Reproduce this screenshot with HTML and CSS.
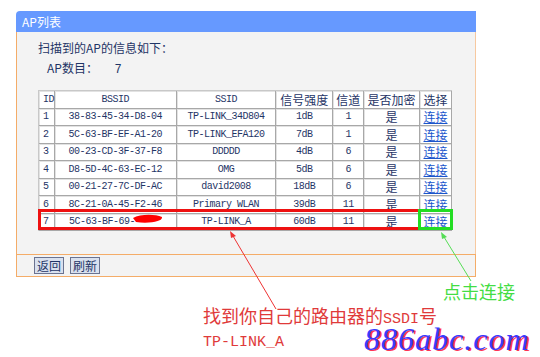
FILE: index.html
```html
<!DOCTYPE html>
<html lang="zh-CN">
<head>
    <meta charset="UTF-8">
    <title>AP列表</title>
    <link rel="stylesheet" href="styles.css">
</head>
<body>
    <div class="page">
        <div class="panel">
            <div class="panel-title">AP列表</div>
            <div class="panel-body">
                <p class="info">扫描到的AP的信息如下：</p>
                <p class="count">AP数目： <span class="num">7</span></p>
                <table class="ap-table">
                    <tr>
                        <th class="c-id mono">ID</th>
                        <th class="c-bssid mono">BSSID</th>
                        <th class="c-ssid mono">SSID</th>
                        <th class="c-sig">信号强度</th>
                        <th class="c-ch">信道</th>
                        <th class="c-enc">是否加密</th>
                        <th class="c-sel">选择</th>
                    </tr>
                    <tr><td class="mono">1</td><td class="mono">38-83-45-34-D8-04</td><td class="mono">TP-LINK_34D804</td><td class="mono">1dB</td><td class="mono">1</td><td>是</td><td><a href="#">连接</a></td></tr>
                    <tr><td class="mono">2</td><td class="mono">5C-63-BF-EF-A1-20</td><td class="mono">TP-LINK_EFA120</td><td class="mono">7dB</td><td class="mono">1</td><td>是</td><td><a href="#">连接</a></td></tr>
                    <tr><td class="mono">3</td><td class="mono">00-23-CD-3F-37-F8</td><td class="mono">DDDDD</td><td class="mono">4dB</td><td class="mono">6</td><td>是</td><td><a href="#">连接</a></td></tr>
                    <tr><td class="mono">4</td><td class="mono">D8-5D-4C-63-EC-12</td><td class="mono">OMG</td><td class="mono">5dB</td><td class="mono">6</td><td>是</td><td><a href="#">连接</a></td></tr>
                    <tr><td class="mono">5</td><td class="mono">00-21-27-7C-DF-AC</td><td class="mono">david2008</td><td class="mono">18dB</td><td class="mono">6</td><td>是</td><td><a href="#">连接</a></td></tr>
                    <tr><td class="mono">6</td><td class="mono">8C-21-0A-45-F2-46</td><td class="mono">Primary WLAN</td><td class="mono">39dB</td><td class="mono">11</td><td>是</td><td><a href="#">连接</a></td></tr>
                    <tr><td class="mono">7</td><td class="mono bssid-hidden">5C-63-BF-69-</td><td class="mono">TP-LINK_A</td><td class="mono">60dB</td><td class="mono">11</td><td>是</td><td><a href="#">连接</a></td></tr>
                </table>
            </div>
            <div class="panel-foot">
                <button class="btn">返回</button>
                <button class="btn">刷新</button>
            </div>
        </div>

        <!-- annotations drawn on top of the screenshot -->
        <svg class="marks" width="540" height="357" viewBox="0 0 540 357">
            <path d="M133 218 C140 214, 155 214, 162 217 C163 221, 150 224, 136 222 Z" fill="#ff0000"/>
            <rect x="39.5" y="210.5" width="380" height="18" fill="none" stroke="#ee1111" stroke-width="3"/>
            <rect x="419.5" y="210.5" width="32" height="18" fill="none" stroke="#22dd22" stroke-width="3"/>
            <line x1="276" y1="309" x2="233" y2="236" stroke="#ee3333" stroke-width="1"/>
            <path d="M230 231 L236 236 L231 238 Z" fill="#ee3333"/>
            <line x1="471" y1="281" x2="444" y2="237" stroke="#55dd55" stroke-width="1"/>
            <path d="M441 232 L447 237 L442 239 Z" fill="#55dd55"/>
        </svg>
        <div class="note-green">点击连接</div>
        <div class="note-red">找到你自己的路由器的<span class="latin">SSDI</span>号<br><span class="latin">TP-LINK_A</span></div>
        <div class="watermark">886abc.com</div>
    </div>
</body>
</html>
```

FILE: styles.css
```css
* {
    margin: 0;
    padding: 0;
    box-sizing: border-box;
}

body {
    background-color: #fff;
    font-family: "Noto Sans CJK SC", sans-serif;
    font-size: 12px;
    color: #1f3566;
}

.page {
    position: relative;
    width: 540px;
    height: 357px;
    padding: 11px 0 0 16px;
}

.panel {
    width: 460px;
}

.panel-title {
    height: 21px;
    line-height: 21px;
    padding-left: 6px;
    background-color: #6699ff;
    color: #fff;
    border-top-left-radius: 4px;
}

.panel-body {
    background-color: #f3f3f3;
    border-left: 1px solid #f4ac68;
    border-right: 1px solid #f7c9a0;
    padding: 6px 0 26px 21px;
    height: 222px;
}

.info {
    line-height: 20px;
}

.count {
    line-height: 20px;
    padding-left: 9px;
}

.count .num {
    margin-left: 14px;
    font-family: "Liberation Mono", monospace;
}

.ap-table {
    margin-top: 10px;
    border-collapse: separate;
    border-spacing: 0;
    width: 414px;
    background-color: #fff;
    border-top: 1px solid #c8c8c8;
    border-left: 1px solid #c8c8c8;
}

.ap-table th,
.ap-table td {
    height: 17.5px;
    text-align: center;
    font-weight: normal;
    border-right: 1px solid #a8a8a8;
    border-bottom: 1px solid #a8a8a8;
    box-shadow: inset 1px 1px 0 #e2e2e2;
    padding: 0;
    line-height: 15px;
}

.ap-table td:first-child,
.ap-table th:first-child {
    text-align: left;
    padding-left: 4px;
}

.mono {
    font-family: "Liberation Mono", monospace;
    font-size: 10px;
    letter-spacing: -0.5px;
    font-weight: bold;
}

.c-id { width: 16px; }
.c-bssid { width: 122px; }
.c-ssid { width: 100px; }
.c-sig { width: 57px; }
.c-ch { width: 31px; }
.c-enc { width: 56px; }
.c-sel { width: 32px; }

.bssid-hidden {
    text-align: left !important;
    padding-left: 14px !important;
}

.ap-table a {
    color: #1a55cc;
    text-decoration: underline;
}

.panel-foot {
    height: 23px;
    background-color: #f3f3f3;
    border: 1px solid #f4ac68;
    padding: 2px 0 0 17px;
    display: flex;
    gap: 6px;
}

.btn {
    height: 17px;
    padding: 0 2px;
    font-family: "Noto Sans CJK SC", sans-serif;
    font-size: 12px;
    color: #1f3566;
    background-color: #d9e1ef;
    border: 1px solid #6b7390;
    line-height: 14px;
}

.marks {
    position: absolute;
    left: 0;
    top: 0;
    pointer-events: none;
}

.note-green {
    position: absolute;
    left: 443px;
    top: 280px;
    font-size: 18px;
    line-height: 22px;
    color: #44dd44;
}

.note-red {
    position: absolute;
    left: 203px;
    top: 306px;
    font-size: 18px;
    line-height: 19px;
    color: #e03a3a;
}

.note-red .latin {
    font-family: "Liberation Mono", monospace;
    font-size: 15px;
}

.watermark {
    position: absolute;
    left: 364px;
    top: 325px;
    font-family: "Liberation Serif", serif;
    font-style: italic;
    font-size: 32px;
    letter-spacing: 1px;
    line-height: 28px;
    color: #3a3aff;
    text-shadow: 2px 1px 0 #ff3355;
}
```
